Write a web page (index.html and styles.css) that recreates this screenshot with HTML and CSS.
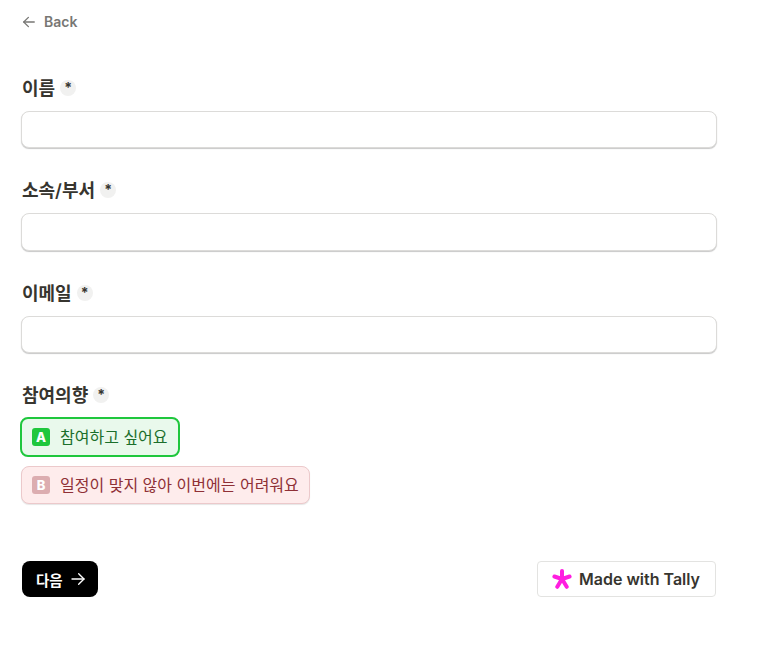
FILE: index.html
```html
<!DOCTYPE html>
<html lang="ko">
<head>
    <meta charset="UTF-8">
    <meta name="viewport" content="width=device-width, initial-scale=1.0">
    <title>Form</title>
    <link rel="stylesheet" href="styles.css">
</head>
<body>
    <div class="container">
        <a class="back" href="#">
            <svg class="back-icon" width="14" height="14" viewBox="0 0 24 24" fill="none" stroke="currentColor" stroke-width="2.2" stroke-linecap="round" stroke-linejoin="round"><path d="M21 12H3"/><path d="M11 4l-8 8 8 8"/></svg>
            Back
        </a>

        <div class="field">
            <div class="label">이름 <span class="required">*</span></div>
            <input class="text-input" type="text">
        </div>

        <div class="field">
            <div class="label">소속/부서 <span class="required">*</span></div>
            <input class="text-input" type="text">
        </div>

        <div class="field">
            <div class="label">이메일 <span class="required">*</span></div>
            <input class="text-input" type="text">
        </div>

        <div class="field">
            <div class="label">참여의향 <span class="required">*</span></div>
            <div class="options">
                <div class="option option-green"><span class="key">A</span><span class="option-text">참여하고 싶어요</span></div>
                <div class="option option-red"><span class="key">B</span><span class="option-text">일정이 맞지 않아 이번에는 어려워요</span></div>
            </div>
        </div>

        <div class="footer">
            <button class="next-button">다음
                <svg width="16" height="16" viewBox="0 0 24 24" fill="none" stroke="currentColor" stroke-width="2" stroke-linecap="round" stroke-linejoin="round"><path d="M3 12h18"/><path d="M13 4l8 8-8 8"/></svg>
            </button>
            <a class="made-with" href="#">
                <svg width="20" height="20" viewBox="0 0 20 20" fill="none" stroke="#ff1ee0" stroke-width="4" stroke-linecap="round"><path d="M10 10V2"/><path d="M10 10L2.4 7.5"/><path d="M10 10L17.6 7.5"/><path d="M10 10L5.3 17.8"/><path d="M10 10L14.7 17.8"/></svg>
                Made with Tally
            </a>
        </div>
    </div>
</body>
</html>
```

FILE: styles.css
```css
body {
    font-family: Inter, "Noto Sans CJK KR", sans-serif;
    margin: 0;
    padding: 0;
    background-color: #fff;
    color: #37352f;
}

.container {
    width: 695px;
    margin-left: 22px;
    padding-top: 13px;
}

.back {
    display: flex;
    align-items: center;
    gap: 8px;
    height: 17px;
    font-size: 14px;
    font-weight: 600;
    color: #787774;
    text-decoration: none;
}

.back-icon {
    flex-shrink: 0;
}

.field {
    margin-top: 29px;
}

.field:first-of-type {
    margin-top: 44.75px;
}

.label {
    display: flex;
    align-items: center;
    gap: 5px;
    height: 24px;
    font-size: 18px;
    font-weight: 600;
    color: #37352f;
    margin-bottom: 12px;
}

.required {
    display: flex;
    align-items: center;
    justify-content: center;
    width: 16px;
    height: 16px;
    margin-top: 2px;
    border-radius: 50%;
    background-color: #f1f1f0;
    font-size: 14px;
    font-weight: 700;
    line-height: 20px;
}

.text-input {
    display: block;
    box-sizing: border-box;
    width: 696px;
    height: 37.5px;
    margin-left: -1px;
    border: 1px solid #dcdbd9;
    border-radius: 8px;
    background: #fff;
    box-shadow: 0 1px 1px rgba(0, 0, 0, 0.22);
}

.options {
    display: flex;
    flex-direction: column;
    align-items: flex-start;
    gap: 9px;
    margin-top: -1px;
}

.option {
    display: flex;
    align-items: center;
    gap: 10px;
    box-sizing: border-box;
    height: 38px;
    padding: 0 10px;
    border: 1px solid;
    border-radius: 8px;
    font-size: 16px;
}

.option-text {
    padding-bottom: 2px;
}

.option-green {
    height: 40px;
    margin-left: -2px;
    padding: 0 10px;
    border: 2px solid #1fc73d;
    background-color: #e9f9ec;
    color: #1b6f2b;
}

.option-red {
    margin-left: -1px;
    border-color: #ecc9cb;
    background-color: #feecec;
    color: #8f3036;
    box-shadow: 0 1px 1px rgba(0, 0, 0, 0.1);
}

.key {
    display: flex;
    align-items: center;
    justify-content: center;
    width: 18px;
    height: 18px;
    border-radius: 3px;
    color: #fff;
    font-size: 13px;
    font-weight: 800;
}

.option-green .key {
    background-color: #1fc73d;
}

.option-red .key {
    background-color: #dcadb0;
}

.footer {
    display: flex;
    justify-content: space-between;
    align-items: center;
    margin-top: 57px;
}

.next-button {
    display: flex;
    align-items: center;
    gap: 7px;
    height: 36px;
    padding: 0 12px 0 14px;
    border: none;
    border-radius: 8px;
    background-color: #000;
    color: #fff;
    font-family: inherit;
    font-size: 14.5px;
    font-weight: 700;
}

.made-with {
    display: flex;
    align-items: center;
    gap: 7px;
    box-sizing: border-box;
    height: 36px;
    padding: 0 15px 0 14px;
    border: 1px solid #e3e3e1;
    border-radius: 4px;
    margin-right: 1px;
    font-size: 16px;
    font-weight: 600;
    color: #37352f;
    text-decoration: none;
}
```
